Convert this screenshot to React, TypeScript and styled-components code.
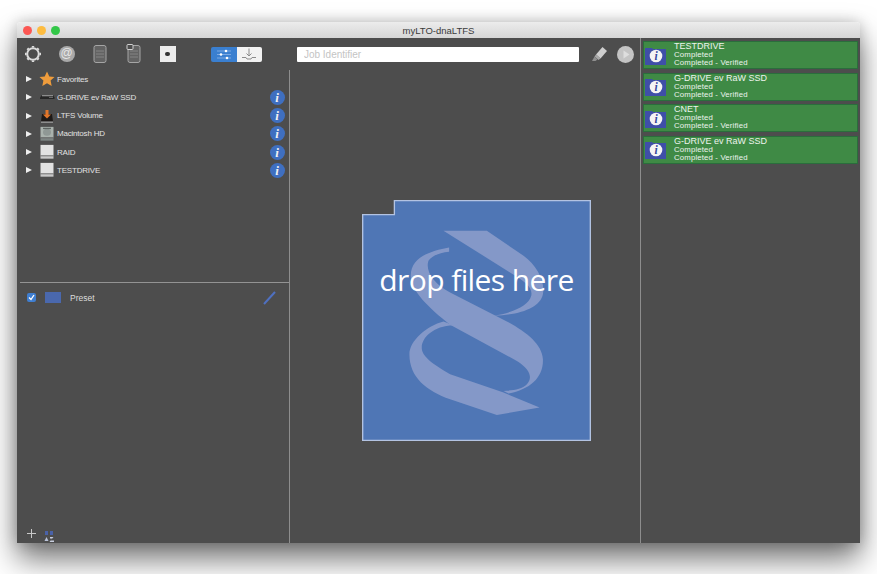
import styled, { createGlobalStyle } from "styled-components"

const GlobalStyle = createGlobalStyle`
  html, body {
    margin: 0;
    background: #fff;
    font-family: "Liberation Sans", Arial, sans-serif;
  }
`

const drives = [
  { name: "Favorites", kind: "star", info: false },
  { name: "G-DRIVE ev RaW SSD", kind: "flat", info: true },
  { name: "LTFS Volume", kind: "ltfs", info: true },
  { name: "Macintosh HD", kind: "mac", info: true },
  { name: "RAID", kind: "white", info: true },
  { name: "TESTDRIVE", kind: "white", info: true },
]

const jobs = ["TESTDRIVE", "G-DRIVE ev RaW SSD", "CNET", "G-DRIVE ev RaW SSD"]

function DriveIcon({ kind }: { kind: string }) {
  if (kind === "star") {
    return (
      <svg width="16" height="16" viewBox="0 0 16 16">
        <path d="M8 .5l2.3 5 5.2.6-3.9 3.5 1.1 5.4L8 12.2 3.3 15l1.1-5.4L.5 6.1l5.2-.6z" fill="#ee9c3c" />
      </svg>
    )
  }
  if (kind === "flat") {
    return (
      <svg width="16" height="16" viewBox="0 0 16 16">
        <path d="M1 8.5L3 6h11l1.5 2.5V10H1z" fill="#262626" />
        <rect x="3" y="6" width="11" height="1.3" fill="#8c8c8c" />
        <rect x="10" y="8" width="4" height="0.8" fill="#777" />
      </svg>
    )
  }
  if (kind === "ltfs") {
    return (
      <svg width="16" height="18" viewBox="0 0 16 18">
        <path d="M3 7h10l1 7.5H2z" fill="#1e1a18" />
        <rect x="2" y="14.5" width="12" height="1.5" fill="#8d8d8d" />
        <path d="M6.5 3h3v4.5H12l-4 4-4-4h2.5z" fill="#e2762a" />
      </svg>
    )
  }
  const top = kind === "mac" ? "#a9b2ad" : "#e2e2e2"
  const low = kind === "mac" ? "#7d8583" : "#c9c9c9"
  return (
    <svg width="14" height="16" viewBox="0 0 14 18" preserveAspectRatio="none">
      <rect x="0.5" y="1" width="13" height="12" fill={top} />
      <rect x="0.5" y="13" width="13" height="3.5" fill={low} />
      <rect x="0.5" y="13" width="13" height="0.8" fill="#666" />
      {kind === "mac" && <circle cx="7" cy="7" r="4" fill="#8f9895" />}
      {kind === "mac" && <rect x="3" y="2" width="8" height="1.5" fill="#5e6462" />}
    </svg>
  )
}

function GearIcon() {
  return (
    <svg width="18" height="18" viewBox="0 0 18 18" fill="none" stroke="#dcdcdc" strokeWidth="2">
      <circle cx="9" cy="9" r="5.8" />
      <path
        strokeWidth="2.4"
        d="M9 1v1.6M9 15.4V17M1 9h1.6M15.4 9H17M3.4 3.4l1.1 1.1M13.5 13.5l1.1 1.1M14.6 3.4l-1.1 1.1M4.5 13.5l-1.1 1.1"
      />
    </svg>
  )
}

function PhoneIcon({ badge }: { badge?: boolean }) {
  return (
    <svg width="18" height="20" viewBox="0 0 18 20" fill="none">
      <rect x="3" y="1.5" width="12" height="17" rx="2" fill="#636363" stroke="#a5a5a5" />
      <path d="M5 7h8M5 10h8M5 13h8" stroke="#858585" />
      {badge && <rect x="2" y="0.5" width="6" height="5" rx="1" fill="#4d4d4d" stroke="#d0d0d0" />}
    </svg>
  )
}

function SlidersIcon() {
  return (
    <svg width="16" height="11" viewBox="0 0 16 11">
      <path d="M1 2h14M1 5.5h14M1 9h14" stroke="#8db4e6" strokeWidth="0.8" />
      <circle cx="10" cy="2" r="1.3" fill="#fff" />
      <circle cx="5" cy="5.5" r="1.3" fill="#fff" />
      <circle cx="11" cy="9" r="1.3" fill="#fff" />
    </svg>
  )
}

function DownloadIcon() {
  return (
    <svg width="16" height="13" viewBox="0 0 16 13" fill="none" stroke="#8b8b8b">
      <path d="M8 0.5v7M5.5 5.5L8 8l2.5-2.5" />
      <path d="M1 9.5h4l1 1.5h4l1-1.5h4" />
    </svg>
  )
}

function MarkerIcon() {
  return (
    <svg width="18" height="18" viewBox="0 0 18 18">
      <path d="M11.5 2l4.5 4-6.5 7.5-4.5-4z" fill="#cfcfcf" />
      <path d="M5 9.5l4.5 4-2 1.5-4-3.5z" fill="#a8a8a8" />
      <path d="M3.5 11.5l3 3-2 1.5H1z" fill="#8f8f8f" />
    </svg>
  )
}

function PlayIcon() {
  return (
    <svg width="17" height="17" viewBox="0 0 17 17">
      <circle cx="8.5" cy="8.5" r="8.5" fill="#c4c4c4" />
      <path d="M6.5 4.5l6 4-6 4z" fill="#dedede" />
    </svg>
  )
}

function JobFolder() {
  return (
    <svg width="21" height="19" viewBox="0 0 21 19">
      <path d="M0 2h7l1 1h13v16H0z" fill="#3f4fa8" />
      <circle cx="11" cy="10" r="6.3" fill="#f4f4f4" />
      <text x="11" y="14" textAnchor="middle" fontFamily="Liberation Serif" fontStyle="italic" fontWeight="700" fontSize="11.5" fill="#35479c">
        i
      </text>
    </svg>
  )
}

function DropArt() {
  return (
    <svg width="229" height="241" viewBox="36 28 686 722">
      <path d="M38 72H133V30H720V748H38z" fill="#4f76b5" stroke="#b3c3e2" strokeWidth="4" />
      <g fill="#8498c8">
        <path d="M280 120H410L520 195C560 225 585 270 578 310C570 350 510 372 430 375C490 365 535 345 543 315C548 290 525 275 500 258z" />
        <path d="M297 170C240 180 182 200 182 255C182 300 235 350 300 402L500 510C540 535 548 560 530 580C515 595 490 598 460 600L475 608C540 595 580 560 578 505C575 460 530 425 470 392L300 305C250 280 225 240 235 210C245 195 270 185 297 183z" />
        <path d="M310 403C250 405 215 440 215 470C215 490 230 510 300 550L460 605L568 650L440 672L300 625C230 600 178 560 178 490C178 450 230 405 280 392z" />
      </g>
    </svg>
  )
}

export default function App() {
  return (
    <Page>
      <GlobalStyle />
      <Window>
        <TitleBar>
          <Lights>
            <Light color="#fc5753" />
            <Light color="#fdbc40" />
            <Light color="#33c748" />
          </Lights>
          myLTO-dnaLTFS
        </TitleBar>
        <Body>
          <Workspace>
            <Toolbar>
              <ToolSlot><GearIcon /></ToolSlot>
              <ToolSlot><AtBadge>@</AtBadge></ToolSlot>
              <ToolSlot><PhoneIcon /></ToolSlot>
              <ToolSlot><PhoneIcon badge /></ToolSlot>
              <ToolSlot><DiskSquare><span /></DiskSquare></ToolSlot>
              <Segment>
                <SegmentPart $active><SlidersIcon /></SegmentPart>
                <SegmentPart><DownloadIcon /></SegmentPart>
              </Segment>
              <JobInput placeholder="Job Identifier" readOnly />
              <ToolAction><MarkerIcon /></ToolAction>
              <PlayAction><PlayIcon /></PlayAction>
            </Toolbar>
            <Panes>
              <LeftPane>
                <Tree>
                  {drives.map((d) => (
                    <TreeRow key={d.name}>
                      <Disclosure />
                      <DriveSlot><DriveIcon kind={d.kind} /></DriveSlot>
                      <DriveName>{d.name}</DriveName>
                      {d.info && <InfoDot>i</InfoDot>}
                    </TreeRow>
                  ))}
                </Tree>
                <Divider />
                <PresetRow>
                  <Check>
                    <svg width="7" height="7" viewBox="0 0 7 7" fill="none" stroke="#fff" strokeWidth="1.3">
                      <path d="M1 3.5l2 2 3-4.5" />
                    </svg>
                  </Check>
                  <Swatch />
                  <PresetName>Preset</PresetName>
                  <PresetEdit>
                    <svg width="13" height="14" viewBox="0 0 13 14">
                      <path d="M1 13L12 1" stroke="#4f70c0" strokeWidth="2" />
                    </svg>
                  </PresetEdit>
                </PresetRow>
                <Footer>
                  <svg width="11" height="11" viewBox="0 0 11 11">
                    <path d="M5.5 1v9M1 5.5h9" stroke="#c8c8c8" strokeWidth="1" />
                  </svg>
                  <SortIcon>
                    <svg width="10" height="11" viewBox="0 0 10 11">
                      <path d="M1 0h3v4H1zM6 0h3v4H6z" fill="#4a62a8" />
                      <path d="M0.5 10l2-4 2 4z" fill="#b9c2d8" />
                      <path d="M6 6h3.5L6.5 9.5H10V11H5.5L8 7.5H6z" fill="#c9cfdf" />
                    </svg>
                  </SortIcon>
                </Footer>
              </LeftPane>
              <CenterPane>
                <DropZone>
                  <DropArt />
                  <DropLabel>drop files here</DropLabel>
                </DropZone>
              </CenterPane>
            </Panes>
          </Workspace>
          <JobPane>
            {jobs.map((name, i) => (
              <JobCard key={i}>
                <JobFolder />
                <JobText>
                  <JobTitle>{name}</JobTitle>
                  <JobLine>Completed</JobLine>
                  <JobLine>Completed - Verified</JobLine>
                </JobText>
              </JobCard>
            ))}
          </JobPane>
        </Body>
      </Window>
    </Page>
  )
}

const Page = styled.div`
  width: 877px;
  height: 574px;
  padding: 22px 17px 31px;
  box-sizing: border-box;
  overflow: hidden;
`

const Window = styled.div`
  height: 521px;
  display: flex;
  flex-direction: column;
  border-radius: 4px 4px 0 0;
  box-shadow: 0 16px 30px rgba(0, 0, 0, 0.55), 0 0 14px rgba(0, 0, 0, 0.2);
`

const TitleBar = styled.div`
  position: relative;
  height: 16px;
  line-height: 17px;
  flex: none;
  text-align: center;
  font-size: 9.5px;
  color: #3a3a3a;
  background: linear-gradient(#ececec, #d6d6d6);
  border-radius: 4px 4px 0 0;
`

const Lights = styled.div`
  position: absolute;
  left: 6px;
  top: 3.5px;
  display: flex;
  gap: 5px;
`

const Light = styled.span<{ color: string }>`
  width: 9px;
  height: 9px;
  border-radius: 50%;
  background: ${(p) => p.color};
`

const Body = styled.div`
  flex: 1;
  min-height: 0;
  display: flex;
  background: #4d4d4d;
`

const Workspace = styled.div`
  width: 623px;
  flex: none;
  display: flex;
  flex-direction: column;
`

const Toolbar = styled.div`
  height: 32px;
  flex: none;
  display: flex;
  align-items: center;
  padding-left: 7px;
`

const ToolSlot = styled.div`
  width: 18px;
  height: 20px;
  margin-right: 15.7px;
  display: flex;
  align-items: center;
  justify-content: center;
`

const AtBadge = styled.span`
  width: 16px;
  height: 16px;
  border-radius: 50%;
  background: #a9a9a9;
  color: #e6e6e6;
  font-size: 12px;
  line-height: 15px;
  text-align: center;
`

const DiskSquare = styled.div`
  width: 16px;
  height: 16px;
  background: #ececec;
  display: flex;
  align-items: center;
  justify-content: center;

  span {
    width: 5px;
    height: 4px;
    border-radius: 2px;
    background: #333;
  }
`

const Segment = styled.div`
  display: flex;
  margin-left: 18.5px;
  height: 15px;
  border-radius: 2px;
  overflow: hidden;
`

const SegmentPart = styled.div<{ $active?: boolean }>`
  width: ${(p) => (p.$active ? 26 : 25)}px;
  display: flex;
  align-items: center;
  justify-content: center;
  background: ${(p) => (p.$active ? "#3a7fd0" : "#f2f2f2")};
`

const JobInput = styled.input`
  width: 282px;
  height: 15px;
  margin-left: 35px;
  padding: 0 7px;
  box-sizing: border-box;
  border: 0;
  border-radius: 1px;
  background: #fff;
  font-family: "Liberation Sans", Arial, sans-serif;
  font-size: 10px;
  outline: none;

  &::placeholder {
    color: #c4c4c4;
  }
`

const ToolAction = styled.div`
  margin-left: 12px;
  height: 18px;
`

const PlayAction = styled.div`
  margin-left: 8px;
  height: 17px;
`

const Panes = styled.div`
  flex: 1;
  min-height: 0;
  display: flex;
`

const LeftPane = styled.div`
  width: 272px;
  flex: none;
  display: flex;
  flex-direction: column;
  border-right: 1px solid #8d8d8d;
`

const Tree = styled.div`
  height: 212px;
  flex: none;
`

const TreeRow = styled.div`
  height: 18.25px;
  display: flex;
  align-items: center;
  padding: 0 4.5px 0 9px;
`

const Disclosure = styled.span`
  width: 0;
  height: 0;
  border-left: 6px solid #eee;
  border-top: 3.5px solid transparent;
  border-bottom: 3.5px solid transparent;
`

const DriveSlot = styled.div`
  width: 16px;
  height: 18px;
  margin-left: 7px;
  flex: none;
  display: flex;
  align-items: center;
  justify-content: center;
`

const DriveName = styled.span`
  margin-left: 2px;
  font-size: 8px;
  letter-spacing: -0.2px;
  color: #e2e2e2;
  white-space: nowrap;
`

const InfoDot = styled.span`
  width: 15px;
  height: 15px;
  margin-left: auto;
  border-radius: 50%;
  background: #3f6fc0;
  color: #f2f2f2;
  font-family: "Liberation Serif", serif;
  font-style: italic;
  font-weight: 700;
  font-size: 13px;
  line-height: 15px;
  text-align: center;
`

const Divider = styled.div`
  height: 1px;
  margin-left: 3px;
  background: #939393;
  flex: none;
`

const PresetRow = styled.div`
  height: 29px;
  flex: none;
  display: flex;
  align-items: center;
  padding: 0 13px 0 10px;
`

const Check = styled.span`
  width: 9px;
  height: 9px;
  border-radius: 2px;
  background: #3f7ed0;
  display: flex;
  align-items: center;
  justify-content: center;
`

const Swatch = styled.span`
  width: 16px;
  height: 11px;
  margin-left: 9px;
  background: #4a68ad;
`

const PresetName = styled.span`
  margin-left: 9px;
  font-size: 8.5px;
  color: #dcdcdc;
`

const PresetEdit = styled.span`
  margin-left: auto;
  height: 14px;
`

const Footer = styled.div`
  margin-top: auto;
  height: 20px;
  flex: none;
  display: flex;
  align-items: center;
  padding-left: 9px;
  gap: 7px;
`

const SortIcon = styled.span`
  height: 11px;
`

const CenterPane = styled.div`
  flex: 1;
  padding: 130px 0 0 72px;
`

const DropZone = styled.div`
  position: relative;
  width: 229px;
  height: 241px;
`

const DropLabel = styled.div`
  position: absolute;
  left: 0;
  right: 0;
  top: 60px;
  text-align: center;
  color: #fff;
  font-family: "Open Sans", sans-serif;
  font-size: 30px;
  line-height: 40px;
  letter-spacing: -0.6px;
  white-space: nowrap;
`

const JobPane = styled.div`
  flex: 1;
  border-left: 1px solid #8d8d8d;
  padding: 3px 2px;
  display: flex;
  flex-direction: column;
  gap: 3.5px;
`

const JobCard = styled.div`
  height: 28px;
  box-sizing: border-box;
  border: 1.5px solid #2a6e3c;
  background: #3f8a45;
  display: flex;
  align-items: center;
  padding-left: 1px;
`

const JobText = styled.div`
  margin: -1px 0 0 8px;
  display: flex;
  flex-direction: column;
  color: #edf3ed;
`

const JobTitle = styled.span`
  font-size: 9px;
  line-height: 9px;
`

const JobLine = styled.span`
  font-size: 7.8px;
  line-height: 8px;
  letter-spacing: 0.15px;
`
